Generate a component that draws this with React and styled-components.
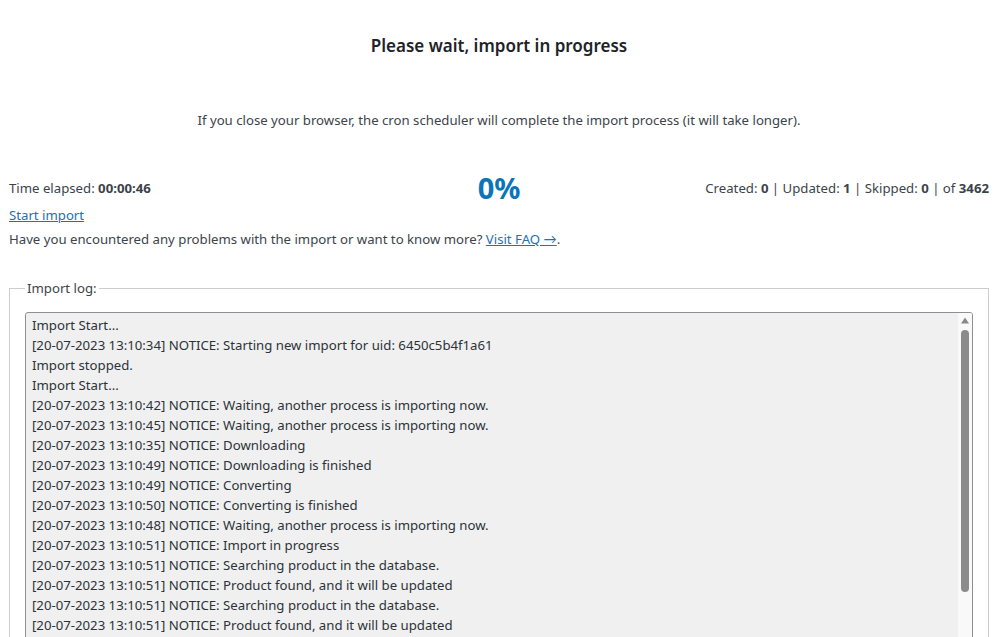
import styled, { createGlobalStyle } from "styled-components";

const GlobalStyle = createGlobalStyle`
  html, body {
    margin: 0;
    background: #fff;
  }
  body {
    font-family: "Segoe UI", "Noto Sans", Lato, sans-serif;
    font-size: 13.2px;
    color: #3c434a;
  }
`;

const Wrap = styled.div`
  padding: 0 10px 0 9px;
`;

const Title = styled.h3`
  margin: 34px 0 0;
  font-size: 17px;
  line-height: 24px;
  font-weight: 600;
  color: #1d2327;
  text-align: center;
`;

const Note = styled.p`
  margin: 52px 0 0;
  line-height: 20px;
  text-align: center;
`;

const StatsRow = styled.div`
  display: grid;
  grid-template-columns: 1fr auto 1fr;
  align-items: center;
  margin-top: 41px;
  height: 34px;
`;

const Elapsed = styled.div`
  justify-self: start;
`;

const Percent = styled.div`
  font-size: 29px;
  font-weight: 700;
  color: #0a75b8;
  line-height: 34px;
`;

const Counts = styled.div`
  justify-self: end;
`;

const Line = styled.div`
  line-height: 20px;
  margin-top: ${(p) => p.gap || 0}px;
`;

const TextLink = styled.a`
  color: #2271b1;
  text-decoration: underline;
`;

const LogBox = styled.fieldset`
  margin: 29px 0 0;
  padding: 14px 15px;
  border: 1px solid #cccccc;
  min-width: 0;
`;

const Legend = styled.legend`
  padding: 0 2px;
  line-height: 20px;
`;

const LogFrame = styled.div`
  display: flex;
  height: 400px;
  background: #f0f0f0;
  border: 1px solid #8c8f94;
  border-radius: 3px;
  overflow: hidden;
`;

const LogArea = styled.textarea`
  flex: 1;
  display: block;
  min-width: 0;
  margin: 0;
  padding: 2px 6px;
  font-family: inherit;
  font-size: 13.2px;
  line-height: 20px;
  color: #2c3338;
  background: transparent;
  border: 0;
  resize: none;
  outline: none;
  overflow: hidden;
`;

const ScrollTrack = styled.div`
  width: 14px;
  flex: none;
  display: flex;
  flex-direction: column;
  align-items: center;
  background: #f9f9f9;
`;

const ArrowBtn = styled.div`
  height: 15px;
  width: 14px;
  display: flex;
  align-items: center;
  justify-content: center;
  flex: none;
`;

const Thumb = styled.div`
  width: 8px;
  margin-top: 2px;
  border-radius: 4px;
  background: #8b8b8b;
  flex: none;
`;

const Spacer = styled.div`
  flex: 1;
`;

const log = [
  "Import Start...",
  "[20-07-2023 13:10:34] NOTICE: Starting new import for uid: 6450c5b4f1a61",
  "Import stopped.",
  "Import Start...",
  "[20-07-2023 13:10:42] NOTICE: Waiting, another process is importing now.",
  "[20-07-2023 13:10:45] NOTICE: Waiting, another process is importing now.",
  "[20-07-2023 13:10:35] NOTICE: Downloading",
  "[20-07-2023 13:10:49] NOTICE: Downloading is finished",
  "[20-07-2023 13:10:49] NOTICE: Converting",
  "[20-07-2023 13:10:50] NOTICE: Converting is finished",
  "[20-07-2023 13:10:48] NOTICE: Waiting, another process is importing now.",
  "[20-07-2023 13:10:51] NOTICE: Import in progress",
  "[20-07-2023 13:10:51] NOTICE: Searching product in the database.",
  "[20-07-2023 13:10:51] NOTICE: Product found, and it will be updated",
  "[20-07-2023 13:10:51] NOTICE: Searching product in the database.",
  "[20-07-2023 13:10:51] NOTICE: Product found, and it will be updated",
  "[20-07-2023 13:10:52] NOTICE: Searching product in the database.",
  "[20-07-2023 13:10:52] NOTICE: Product found, and it will be updated",
  "[20-07-2023 13:10:52] NOTICE: Searching product in the database.",
  "[20-07-2023 13:10:52] NOTICE: Product found, and it will be updated",
  "[20-07-2023 13:10:53] NOTICE: Searching product in the database.",
  "[20-07-2023 13:10:53] NOTICE: Product found, and it will be updated",
].join("\n");

function Arrow({ down }) {
  return (
    <ArrowBtn>
      <svg width="8" height="7" viewBox="0 0 8 7">
        <path d={down ? "M0 0.5 L8 0.5 L4 6.5 Z" : "M0 6.5 L8 6.5 L4 0.5 Z"} fill="#8a8a8a" />
      </svg>
    </ArrowBtn>
  );
}

export default function App() {
  return (
    <Wrap>
      <GlobalStyle />
      <Title>Please wait, import in progress</Title>
      <Note>
        If you close your browser, the cron scheduler will complete the import process (it will take longer).
      </Note>
      <StatsRow>
        <Elapsed>
          Time elapsed: <b>00:00:46</b>
        </Elapsed>
        <Percent>0%</Percent>
        <Counts>
          Created: <b>0</b> | Updated: <b>1</b> | Skipped: <b>0</b> | of <b>3462</b>
        </Counts>
      </StatsRow>
      <Line gap={0}>
        <TextLink href="#">Start import</TextLink>
      </Line>
      <Line gap={4}>
        Have you encountered any problems with the import or want to know more?{" "}
        <TextLink href="#">Visit FAQ →</TextLink>.
      </Line>
      <LogBox>
        <Legend>Import log:</Legend>
        <LogFrame>
          <LogArea readOnly value={log} />
          <ScrollTrack>
            <Arrow />
            <Thumb style={{ height: 262 }} />
            <Spacer />
            <Arrow down />
          </ScrollTrack>
        </LogFrame>
      </LogBox>
    </Wrap>
  );
}
